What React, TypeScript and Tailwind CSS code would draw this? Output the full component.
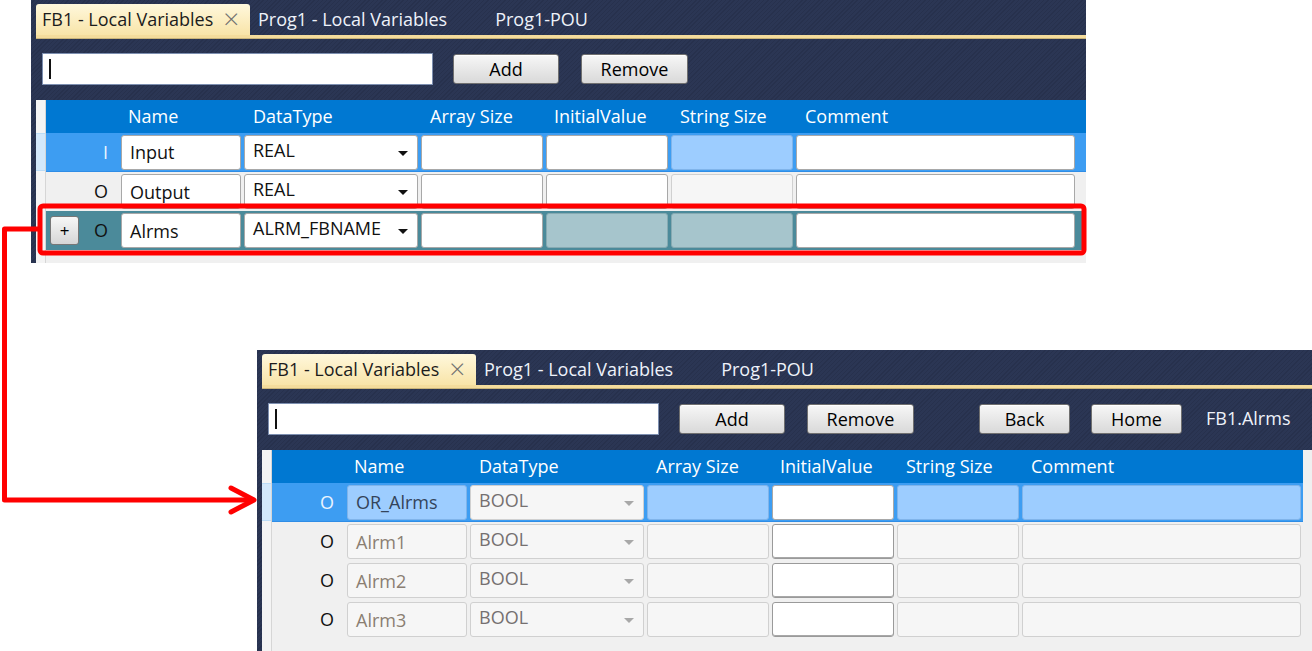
import { FC, ReactNode } from "react";

const font = { fontFamily: '"Open Sans", "Noto Sans", sans-serif' };

type CellKind = "white" | "blue" | "teal" | "off" | "edit";

const cellClass: Record<CellKind, string> = {
  white: "bg-white border border-[#a8a8a8]",
  blue: "bg-[#9dcdff] border border-[#80b4ea]",
  teal: "bg-[#a6c5cc] border border-[#86aab2]",
  off: "bg-[#f6f6f6] border border-[#d0d0d0]",
  edit: "bg-white border border-[#9a9a9a] shadow-[inset_0_-1px_0_#a8a8a8]",
};

type Cell = { kind: CellKind; text?: string; combo?: boolean; dim?: boolean; color?: string };

type Row = {
  bg: "sel" | "plain" | "teal";
  letter: string;
  plus?: boolean;
  cells: Cell[];
};

const rowBg = {
  sel: "bg-[#3d9df2]",
  plain: "bg-[#f0f0f0]",
  teal: "bg-[#4b8a9a]",
};

const cols = "grid grid-cols-[72px_120px_174px_122px_122px_122px_279px] gap-x-[3px]";

const ToolButton: FC<{ w: string; children: ReactNode }> = ({ w, children }) => (
  <button
    className={`${w} h-[30px] rounded-[3px] border border-[#6f6f6f] bg-linear-to-b from-[#f7f7f7] to-[#d9d9d9] text-[18px] leading-none text-black shadow-[inset_0_1px_0_#ffffff]`}
  >
    {children}
  </button>
);

const CellBox: FC<{ cell: Cell }> = ({ cell }) => (
  <div className={`${cellClass[cell.kind]} relative h-[35px] rounded-[3px] flex items-center pl-[8px] text-[18px]`}>
    {cell.text && (
      <span className={cell.combo ? "pb-[4px]" : "pt-[1px]"} style={{ color: cell.color ?? "#111" }}>
        {cell.text}
      </span>
    )}
    {cell.combo && (
      <svg className="absolute right-[9px] top-[15px]" width="10" height="6" viewBox="0 0 10 6">
        <path d="M0 0 L10 0 L5 5 Z" fill={cell.dim ? "#a8a8a8" : "#111"} />
      </svg>
    )}
  </div>
);

const Panel: FC<{
  extra?: ReactNode;
  rows: Row[];
  tableW: string;
  height: string;
}> = ({ extra, rows, tableW, height }) => (
  <div
    className={`w-[1055px] ${height} flex flex-col bg-[repeating-linear-gradient(135deg,#2b3654_0px,#2b3654_2px,#27314d_2px,#27314d_3px)] pl-[5px]`}
  >
    {/* tabs */}
    <div className="h-[35px] flex items-end text-[18px]">
      <div className="w-[214px] h-[31px] rounded-t-[3px] bg-linear-to-b from-[#fff8dc] to-[#f8e4a8] flex items-center pl-[6px] text-[#1c1c1c]">
        <span>FB1 - Local Variables</span>
        <span className="ml-[10px] text-[28px] font-light leading-none text-[#707070] pb-[3px]">×</span>
      </div>
      <div className="h-[31px] flex items-center pl-[8px] text-[#eef2fa]">Prog1 - Local Variables</div>
      <div className="h-[31px] flex items-center pl-[48px] text-[#eef2fa]">Prog1-POU</div>
    </div>
    <div className="h-[4px] bg-[#f4dc9c] border-b border-[#c9b47a]" />

    {/* toolbar */}
    <div className="h-[61px] flex items-center pl-[6px] pb-[2px]">
      <div className="w-[391px] h-[32px] bg-white border border-[#7d8fb0] flex items-center pl-[6px]">
        <div className="w-[2px] h-[20px] bg-[#111]" />
      </div>
      <div className="ml-[20px]">
        <ToolButton w="w-[106px]">Add</ToolButton>
      </div>
      <div className="ml-[22px]">
        <ToolButton w="w-[107px]">Remove</ToolButton>
      </div>
      {extra}
    </div>

    {/* table */}
    <div className="flex-1 flex bg-[#f0f0f0]">
      <div className="w-[10px] bg-[#f4f4f4] border-r border-[#d6d6d6] flex flex-col">
        <div className="h-[33px]" />
        <div className="h-[38px] bg-[#d3e8fb] border-y border-[#bcdcf6]" />
      </div>
      <div className={`${tableW} flex flex-col`}>
        <div className={`${cols} h-[33px] bg-[#0078d2] items-center text-[18px] text-white`}>
          <div />
          <div className="pl-[7px]">Name</div>
          <div className="pl-[9px]">DataType</div>
          <div className="pl-[9px]">Array Size</div>
          <div className="pl-[8px]">InitialValue</div>
          <div className="pl-[9px]">String Size</div>
          <div className="pl-[9px]">Comment</div>
        </div>
        {rows.map((r, i) => (
          <div
            key={i}
            className={`${cols} ${rowBg[r.bg]} h-[39px] items-center ${r.bg === "sel" ? "border-b border-[#2f8de6]" : ""}`}
          >
            <div className="flex items-center justify-between h-full">
              {r.plus ? (
                <button className="ml-[4px] w-[29px] h-[29px] rounded-[3px] border border-[#777] bg-linear-to-b from-[#f7f7f7] to-[#d6d6d6] text-[17px] leading-none text-black">
                  +
                </button>
              ) : (
                <div />
              )}
              <span className={`pr-[10px] text-[18px] ${r.bg === "sel" ? "text-[#eaf4ff]" : "text-[#111]"}`}>{r.letter}</span>
            </div>
            {r.cells.map((c, j) => (
              <CellBox key={j} cell={c} />
            ))}
          </div>
        ))}
      </div>
    </div>
  </div>
);

const topRows: Row[] = [
  {
    bg: "sel",
    letter: "I",
    cells: [
      { kind: "white", text: "Input" },
      { kind: "white", text: "REAL", combo: true },
      { kind: "white" },
      { kind: "white" },
      { kind: "blue" },
      { kind: "white" },
    ],
  },
  {
    bg: "plain",
    letter: "O",
    cells: [
      { kind: "white", text: "Output" },
      { kind: "white", text: "REAL", combo: true },
      { kind: "white" },
      { kind: "white" },
      { kind: "off" },
      { kind: "white" },
    ],
  },
  {
    bg: "teal",
    letter: "O",
    plus: true,
    cells: [
      { kind: "white", text: "Alrms" },
      { kind: "white", text: "ALRM_FBNAME", combo: true },
      { kind: "white" },
      { kind: "teal" },
      { kind: "teal" },
      { kind: "white" },
    ],
  },
];

const alarmRow = (name: string): Row => ({
  bg: "plain",
  letter: "O",
  cells: [
    { kind: "off", text: name, color: "#8a7e72" },
    { kind: "off", text: "BOOL", combo: true, dim: true, color: "#757070" },
    { kind: "off" },
    { kind: "edit" },
    { kind: "off" },
    { kind: "off" },
  ],
});

const bottomRows: Row[] = [
  {
    bg: "sel",
    letter: "O",
    cells: [
      { kind: "blue", text: "OR_Alrms", color: "#34445a" },
      { kind: "off", text: "BOOL", combo: true, dim: true, color: "#757070" },
      { kind: "blue" },
      { kind: "white" },
      { kind: "blue" },
      { kind: "blue" },
    ],
  },
  alarmRow("Alrm1"),
  alarmRow("Alrm2"),
  alarmRow("Alrm3"),
];

const App: FC = () => {
  return (
    <div className="relative w-[1312px] h-[651px] bg-white overflow-hidden" style={font}>
      <div className="flex flex-col">
        <div className="ml-[31px]">
          <Panel rows={topRows} tableW="w-[1040px]" height="h-[263px]" />
        </div>
        <div className="ml-[257px] mt-[87px]">
          <Panel
            rows={bottomRows}
            tableW="w-[1031px]"
            height="h-[301px]"
            extra={
              <>
                <div className="ml-[65px]">
                  <ToolButton w="w-[91px]">Back</ToolButton>
                </div>
                <div className="ml-[21px]">
                  <ToolButton w="w-[91px]">Home</ToolButton>
                </div>
                <span className="ml-[24px] text-[18px] text-[#eef2fa]">FB1.Alrms</span>
              </>
            }
          />
        </div>
      </div>

      {/* annotation */}
      <svg className="absolute left-0 top-0 pointer-events-none" width="1312" height="651" viewBox="0 0 1312 651">
        <rect x="40" y="206" width="1044" height="47" rx="3" fill="none" stroke="#ff0000" strokeWidth="5" />
        <path d="M40 229 H4.5 V500 H252" fill="none" stroke="#ff0000" strokeWidth="5" strokeLinejoin="round" />
        <path d="M231 488 L254 500 L231 512" fill="none" stroke="#ff0000" strokeWidth="5" strokeLinejoin="round" strokeLinecap="round" />
      </svg>
    </div>
  );
};

export default App;
